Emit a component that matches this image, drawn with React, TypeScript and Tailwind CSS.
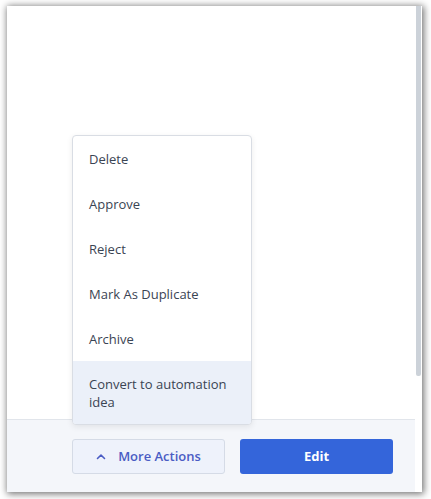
import React from "react";

const items: { label: string; active?: boolean }[] = [
  { label: "Delete" },
  { label: "Approve" },
  { label: "Reject" },
  { label: "Mark As Duplicate" },
  { label: "Archive" },
  { label: "Convert to automation idea", active: true },
];

function ChevronUp() {
  return (
    <svg width="10" height="7" viewBox="0 0 10 7" fill="none">
      <path d="M1.5 5.5L5 2L8.5 5.5" stroke="currentColor" strokeWidth="1.6" strokeLinecap="round" strokeLinejoin="round" />
    </svg>
  );
}

export default function App() {
  return (
    <div
      className="relative w-[431px] h-[499px] bg-white overflow-hidden"
      style={{ fontFamily: '"Open Sans", "Noto Sans", sans-serif' }}
    >
      <div className="absolute left-[7px] top-[6px] w-[415px] h-[486px] bg-white shadow-[1px_1px_7px_1px_rgba(0,0,0,0.55)] flex">
        <div className="relative flex-1 flex flex-col">
          <div className="flex-1" />
          <div className="h-[73px] bg-[#f4f6fa] border-t border-[#e1e5eb] flex items-start pt-[19px] pl-[65px] gap-[15px]">
            <button className="w-[153px] h-[35px] rounded-[3px] border border-[#d5dbe6] bg-[#eef2fb] text-[#4a5cc4] text-[13px] font-semibold flex items-center justify-center gap-[12px]">
              <ChevronUp />
              <span>More Actions</span>
            </button>
            <button className="w-[153px] h-[35px] rounded-[3px] bg-[#3465da] text-white text-[13px] font-bold flex items-center justify-center">
              Edit
            </button>
          </div>

          <div className="absolute left-[65px] top-[129px] w-[180px] bg-white border border-[#d9dde4] rounded-[4px] shadow-[0_2px_6px_rgba(0,0,0,0.08)] overflow-hidden">
            {items.map((it) => (
              <div
                key={it.label}
                className={`px-[16px] py-[13.5px] text-[13px] leading-[18px] text-[#3a4453] ${it.active ? "bg-[#ebf0f9]" : ""}`}
              >
                {it.label}
              </div>
            ))}
          </div>
        </div>
        <div className="w-[7px] bg-white">
          <div className="ml-[1px] w-[5px] h-[370px] bg-[#ccd2d9] rounded-b-[2px]" />
        </div>
      </div>
    </div>
  );
}
